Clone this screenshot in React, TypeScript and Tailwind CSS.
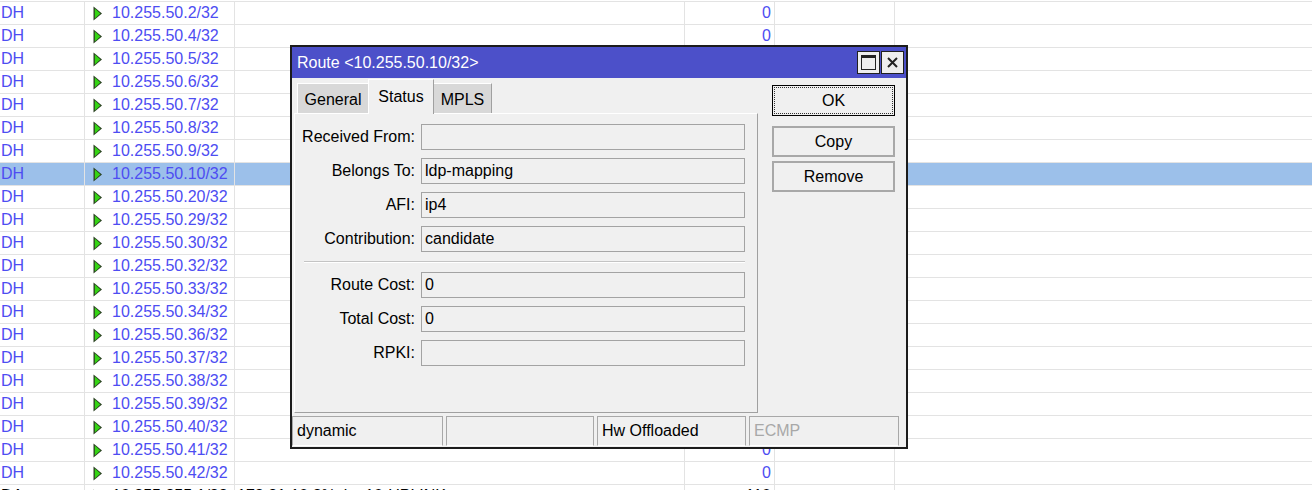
import React from "react";

const rows = [
  "10.255.50.2/32",
  "10.255.50.4/32",
  "10.255.50.5/32",
  "10.255.50.6/32",
  "10.255.50.7/32",
  "10.255.50.8/32",
  "10.255.50.9/32",
  "10.255.50.10/32",
  "10.255.50.20/32",
  "10.255.50.29/32",
  "10.255.50.30/32",
  "10.255.50.32/32",
  "10.255.50.33/32",
  "10.255.50.34/32",
  "10.255.50.36/32",
  "10.255.50.37/32",
  "10.255.50.38/32",
  "10.255.50.39/32",
  "10.255.50.40/32",
  "10.255.50.41/32",
  "10.255.50.42/32",
];

function Arrow() {
  return (
    <svg width="10" height="15" viewBox="0 0 10 15" className="shrink-0">
      <polygon points="0.5,0.5 9,7.5 0.5,14.5" fill="#2a3f22" />
      <polygon points="1.8,2.6 7.4,7.5 1.8,12.4" fill="#35d414" />
    </svg>
  );
}

function Row({ dst, selected, black, gw, cost }: { dst: string; selected?: boolean; black?: boolean; gw?: string; cost: string }) {
  const color = black ? "text-[#000000]" : "text-[#4d4df2]";
  return (
    <div className={`flex h-[23px] border-t border-[#e3e3e3] ${color}`}>
      <div className={`flex h-[22px] w-full ${selected ? "bg-[#9cc0ea]" : ""}`}>
        <div className="flex w-[85px] shrink-0 items-center border-r border-[#e3e3e3] pl-[1px]">{black ? "DAo" : "DH"}</div>
        <div className="flex w-[150px] shrink-0 items-center border-r border-[#e3e3e3] pl-[8px]">
          <Arrow />
          <span className="ml-[9px] whitespace-nowrap">{dst}</span>
        </div>
        <div className="flex w-[450px] shrink-0 items-center border-r border-[#e3e3e3] pl-[2px] whitespace-nowrap">{gw ?? ""}</div>
        <div className="flex w-[90px] shrink-0 items-center justify-end border-r border-[#e3e3e3] pr-[3px]">{cost}</div>
        <div className="w-[120px] shrink-0 border-r border-[#e3e3e3]"></div>
        <div className="flex-1"></div>
      </div>
    </div>
  );
}

function Field({ label, value }: { label: string; value: string }) {
  return (
    <div className="flex h-[26px] items-center">
      <div className="flex w-[112px] shrink-0 justify-end whitespace-nowrap pr-[1px]">{label}</div>
      <div className="ml-[5px] flex h-[26px] w-[324px] items-center whitespace-nowrap border border-[#a3a3a3] pl-[3px]">{value}</div>
    </div>
  );
}

export default function App() {
  return (
    <div
      className="relative h-[490px] w-[1312px] overflow-hidden bg-white text-[16px] leading-none"
      style={{ fontFamily: '"Liberation Sans", Arial, sans-serif' }}
    >
      <div className="h-[1px]"></div>
      {rows.map((r, i) => (
        <Row key={r} dst={r} selected={i === 7} cost={i < 2 || i > 18 ? "0" : ""} />
      ))}
      <Row dst="10.255.255.1/32" black gw="172.31.10.2%vlan10-UPLINK" cost="110" />

      {/* Dialog window */}
      <div className="absolute left-[290px] top-[45px] flex h-[404px] w-[618px] flex-col border-2 border-[#1c1c1c] bg-[#f0f0f0] text-black">
        {/* Title bar */}
        <div className="flex h-[31px] shrink-0 items-center bg-[#4c50c9] pl-[5px] pr-[2px] text-white">
          <span className="flex-1 whitespace-nowrap pt-[1px]">Route &lt;10.255.50.10/32&gt;</span>
          <div className="flex h-[23px] w-[23px] items-center justify-center border border-[#202020] bg-[#eeeeee]">
            <div className="h-[15px] w-[15px] border border-t-[3px] border-[#222222]"></div>
          </div>
          <div className="ml-[1px] flex h-[23px] w-[23px] items-center justify-center border border-[#202020] bg-[#eeeeee]">
            <svg width="13" height="13" viewBox="0 0 13 13">
              <path d="M2 2 L11 11 M11 2 L2 11" stroke="#222" strokeWidth="2" />
            </svg>
          </div>
        </div>

        {/* Body */}
        <div className="flex flex-1">
          <div className="flex w-[466px] shrink-0 flex-col pl-[2px]">
            {/* Tabs */}
            <div className="flex h-[35px] items-end pl-[3px]">
              <div className="flex h-[30px] w-[71px] items-center justify-center border-l border-t border-white bg-[#d8d8d8] pt-[3px]">General</div>
              <div className="relative -mb-[1px] flex h-[35px] w-[66px] items-center justify-center border-l border-r border-t border-white border-r-[#a0a0a0] bg-[#f0f0f0] pb-[1px]">Status</div>
              <div className="flex h-[30px] w-[58px] items-center justify-center border-r border-t border-white border-r-[#a0a0a0] bg-[#d8d8d8] pt-[3px]">MPLS</div>
            </div>
            {/* Panel */}
            <div className="flex h-[300px] flex-col border border-white border-b-[#a0a0a0] border-r-[#a0a0a0] pl-[9px] pt-[10px]">
              <div className="flex flex-col gap-[8px]">
                <Field label="Received From:" value="" />
                <Field label="Belongs To:" value="ldp-mapping" />
                <Field label="AFI:" value="ip4" />
                <Field label="Contribution:" value="candidate" />
              </div>
              <div className="my-[9px] h-[2px] w-[441px] border-t border-[#c4c4c4] border-b border-b-white"></div>
              <div className="flex flex-col gap-[8px]">
                <Field label="Route Cost:" value="0" />
                <Field label="Total Cost:" value="0" />
                <Field label="RPKI:" value="" />
              </div>
            </div>
          </div>
          {/* Buttons */}
          <div className="flex flex-col pl-[14px] pt-[7px]">
            <div className="flex h-[31px] w-[123px] items-center justify-center border border-black p-[1px]">
              <div className="flex h-full w-full items-center justify-center border border-dotted border-[#333]">OK</div>
            </div>
            <div className="mt-[10px] flex h-[31px] w-[123px] items-center justify-center border-2 border-[#a8a8a8]">Copy</div>
            <div className="mt-[4px] flex h-[31px] w-[123px] items-center justify-center border-2 border-[#a8a8a8]">Remove</div>
          </div>
        </div>

        {/* Status bar */}
        <div className="mt-[2px] flex h-[31px] shrink-0 gap-[3px] pb-[1px]">
          <div className="flex w-[151px] items-center border border-[#a8a8a8] border-b-white pl-[4px]">dynamic</div>
          <div className="flex w-[148px] items-center border border-[#a8a8a8] border-b-white pl-[4px]"></div>
          <div className="flex w-[149px] items-center whitespace-nowrap border border-[#a8a8a8] border-b-white pl-[4px]">Hw Offloaded</div>
          <div className="flex w-[150px] items-center border border-[#a8a8a8] border-b-white pl-[4px] text-[#a8a8a8]">ECMP</div>
        </div>
      </div>
    </div>
  );
}
